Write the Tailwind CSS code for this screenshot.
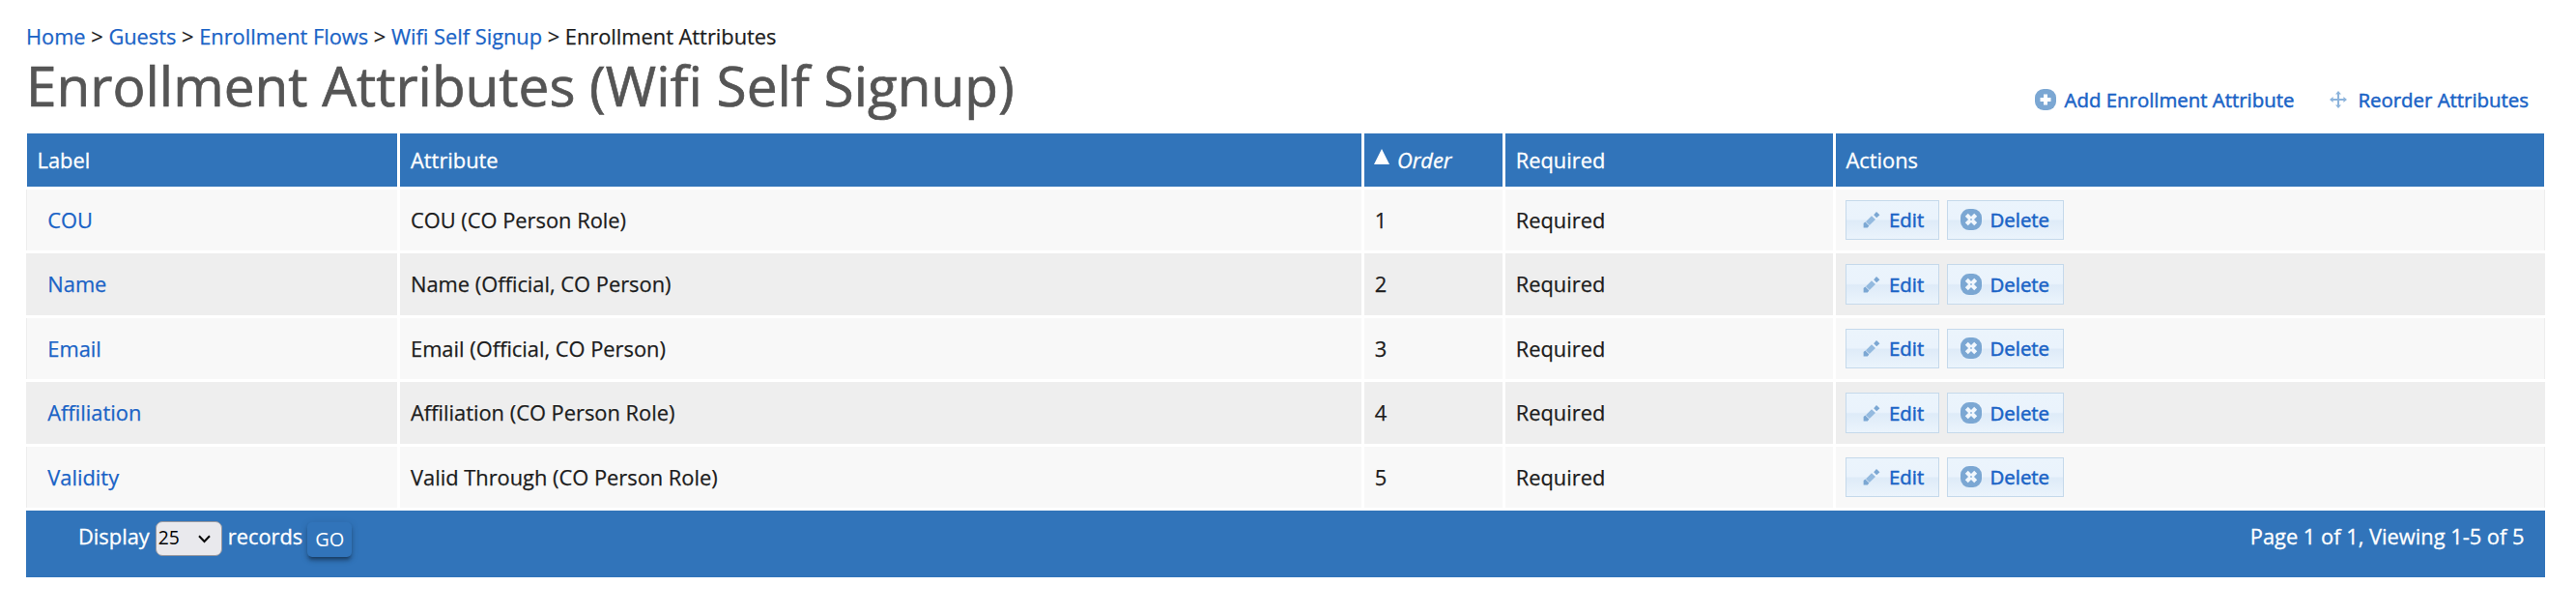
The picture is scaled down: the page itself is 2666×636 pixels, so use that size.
<!DOCTYPE html>
<html lang="en">
<head>
<meta charset="utf-8">
<title>Enrollment Attributes (Wifi Self Signup)</title>
<script src="https://cdn.jsdelivr.net/npm/@tailwindcss/browser@4"></script>
</head>
<body class="bg-white font-['Open_Sans','Noto_Sans',sans-serif] text-[21.85px] leading-[30px] text-[#1c1c1c] [-webkit-text-stroke:0.25px]">
<svg class="hidden">
  <symbol id="plus" viewBox="0 0 22 22"><rect width="22" height="22" rx="9" fill="#7ba7d3"/><path d="M11 5.5v11M5.5 11h11" stroke="#fff" stroke-width="4"/></symbol>
  <symbol id="cross" viewBox="0 0 22 22"><rect width="22" height="22" rx="9" fill="#7ba7d3"/><path d="M6.3 6.3l9.4 9.4M15.7 6.3l-9.4 9.4" stroke="#f1f7fd" stroke-width="4.2"/><path d="M10 11h2" stroke="#a9c8e6" stroke-width="2"/></symbol>
  <symbol id="move" viewBox="0 0 18 18"><path d="M9 2v14M2 9h14" stroke="#8db4dc" stroke-width="2"/><path d="M9 0l3 3.6H6zM9 18l3-3.6H6zM0 9l3.6-3v6zM18 9l-3.6-3v6z" fill="#8db4dc"/></symbol>
  <symbol id="pencil" viewBox="0 0 18 18"><path d="M0.6 17.4V13l1.8-1.4 4 4-1.6 1.8z" fill="#7ba7d3"/><path d="M3 11.2l6-6L13 9l-6.2 6z" fill="#94badf"/><path d="M11.2 4.2L14 1l3.4 3.2-3.2 3z" fill="#7ba7d3"/></symbol>
</svg>
<main class="pl-[27px] pr-[32px] pt-[23px]">
  <nav class="whitespace-pre text-[21.8px]"><a class="text-[#1a63c6]">Home</a> &gt; <a class="text-[#1a63c6]">Guests</a> &gt; <a class="text-[#1a63c6]">Enrollment Flows</a> &gt; <a class="text-[#1a63c6]">Wifi Self Signup</a> &gt; Enrollment Attributes</nav>
  <header class="flex h-[85px] justify-between">
    <h1 class="text-[56.7px] leading-[70px] text-[#555555] whitespace-nowrap [-webkit-text-stroke:0.7px]">Enrollment Attributes (Wifi Self Signup)</h1>
    <div class="flex h-[28px] mt-[36px] mr-[17px] items-center text-[20.4px] leading-[28px] text-[#1a63c6] [-webkit-text-stroke:0.5px]">
      <a class="flex items-center"><svg class="size-[22px] mr-[9px]"><use href="#plus"/></svg>Add Enrollment Attribute</a>
      <a class="flex items-center ml-[37px]"><svg class="size-[18px] mr-[11px]"><use href="#move"/></svg>Reorder Attributes</a>
    </div>
  </header>

  <div id="table" class="grid grid-cols-[384px_995px_143px_339px_734px] gap-x-[3px] [-webkit-text-stroke:0.3px]">
    <div class="ml-px h-[55px] bg-[#3174ba] pl-[10.5px] pt-[13px] text-white">Label</div>
    <div class="h-[55px] bg-[#3174ba] pl-[11px] pt-[13px] text-white">Attribute</div>
    <div class="flex h-[55px] bg-[#3174ba] pl-[10px] pt-[13px] text-white italic"><svg class="mt-[3px] mr-[8px] h-[16px] w-[16px]" viewBox="0 0 16 16"><path d="M8 0l8 16H0z" fill="#fff"/></svg>Order</div>
    <div class="h-[55px] bg-[#3174ba] pl-[10.7px] pt-[13px] text-white">Required</div>
    <div class="mr-px h-[55px] bg-[#3174ba] pl-[10.5px] pt-[13px] text-white">Actions</div>
  </div>
  <div id="rows"></div>

  <footer class="mt-[3px] flex h-[69px] items-start justify-between bg-[#3174ba] pl-[54px] pr-[21.5px] text-white [-webkit-text-stroke:0.3px]">
    <div class="flex">
      <span class="mt-[12px]">Display</span>
      <span class="ml-[6px] mt-[11px] flex h-[36px] w-[69px] items-center justify-between rounded-[7px] border border-[#98989f] bg-[#e9e9ed] pl-[2px] pr-[10.5px] pb-[2px] text-[19.3px] text-black [-webkit-text-stroke:0px]">25<svg class="mt-[2px] h-[9px] w-[13px]" viewBox="0 0 13 9"><path d="M1 1.2l5.5 5.8L12 1.2" fill="none" stroke="#000" stroke-width="2"/></svg></span>
      <span class="ml-[6px] mt-[12px]">records</span>
      <span class="ml-[5px] mt-[12px] h-[36px] w-[46px] rounded-[5px] bg-[#3174ba] pt-[3px] text-center text-[20px] leading-[30px] shadow-[0_4px_4px_0_rgba(0,0,0,0.2),0_2px_8px_0_rgba(0,0,0,0.14),0_4px_3px_-2px_rgba(0,0,0,0.25)] [-webkit-text-stroke:0px]">GO</span>
    </div>
    <span class="mt-[12px]">Page 1 of 1, Viewing 1-5 of 5</span>
  </footer>
</main>
<script>
const data = [
  ["COU", "COU (CO Person Role)", 63],
  ["Name", "Name (Official, CO Person)", 64],
  ["Email", "Email (Official, CO Person)", 63],
  ["Affiliation", "Affiliation (CO Person Role)", 64],
  ["Validity", "Valid Through (CO Person Role)", 63]
];
const button = "flex items-center border border-[#c5d9eb] bg-[linear-gradient(#ebf4fc_0%,#eaf3fc_48%,#deebf8_52%,#ebf4fc_100%)] text-[20.4px] leading-[28px] text-[#1a63c6] pb-px [-webkit-text-stroke:0.5px]";
document.getElementById("rows").innerHTML = data.map(([label, attr, h], i) => {
  const odd = i % 2 === 0;
  const bg = odd ? "bg-[#f8f8f8]" : "bg-[#eeeeee]";
  const bh = odd ? "h-[41px]" : "h-[42px]";
  return `<div class="mt-[3px] grid grid-cols-[384px_995px_143px_339px_734px] gap-x-[3px]" style="height:${h}px">
    <div class="${bg} border-l border-[#eeeeee] pl-[21.3px] pt-[17px] text-[#1a63c6]">${label}</div>
    <div class="${bg} pl-[11px] pt-[17px]">${attr}</div>
    <div class="${bg} pl-[10.7px] pt-[17px]">${i + 1}</div>
    <div class="${bg} pl-[10.7px] pt-[17px]">Required</div>
    <div class="${bg} flex gap-[8px] border-r border-[#eeeeee] pl-[10px] pt-[11px]">
      <a class="${button} ${bh} w-[97px] pl-[17px]"><svg class="size-[18px] mr-[9px]"><use href="#pencil"/></svg>Edit</a>
      <a class="${button} ${bh} w-[121px] pl-[12.5px]"><svg class="size-[22px] mr-[9px]"><use href="#cross"/></svg>Delete</a>
    </div>
  </div>`;
}).join("");
</script>
</body>
</html>
